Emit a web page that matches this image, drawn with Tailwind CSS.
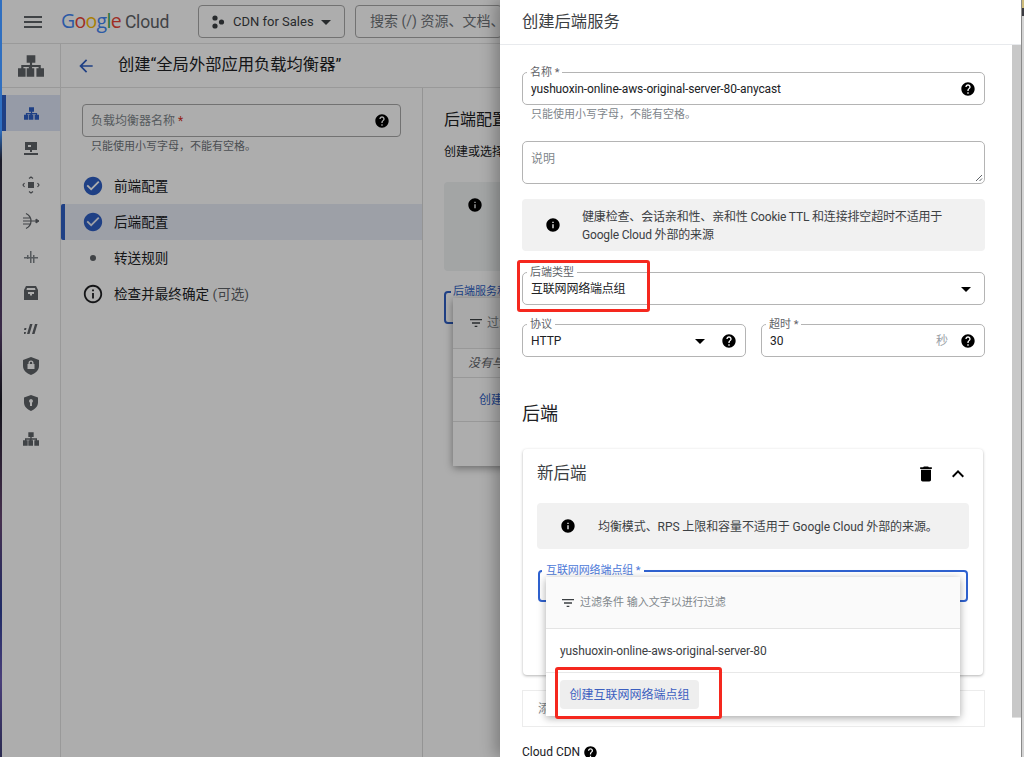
<!DOCTYPE html>
<html lang="zh-CN">
<head>
    <meta charset="UTF-8">
    <title>创建后端服务</title>
    <script src="https://cdn.jsdelivr.net/npm/@tailwindcss/browser@4"></script>
</head>
<body class="m-0 overflow-hidden bg-white">
    <svg class="hidden">
        <symbol id="help" viewBox="0 0 24 24"><path d="M12 2C6.48 2 2 6.48 2 12s4.48 10 10 10 10-4.48 10-10S17.52 2 12 2zm1 17h-2v-2h2v2zm2.07-7.75l-.9.92C13.45 12.9 13 13.5 13 15h-2v-.5c0-1.1.45-2.1 1.17-2.83l1.24-1.26c.37-.36.59-.86.59-1.41 0-1.1-.9-2-2-2s-2 .9-2 2H8c0-2.21 1.79-4 4-4s4 1.79 4 4c0 .88-.36 1.68-.93 2.25z"/></symbol>
        <symbol id="info" viewBox="0 0 24 24"><path d="M12 2C6.48 2 2 6.48 2 12s4.48 10 10 10 10-4.48 10-10S17.52 2 12 2zm1 15h-2v-6h2v6zm0-8h-2V7h2v2z"/></symbol>
        <symbol id="check" viewBox="0 0 24 24"><path d="M12 2C6.48 2 2 6.48 2 12s4.48 10 10 10 10-4.48 10-10S17.52 2 12 2zm-2 15l-5-5 1.41-1.41L10 14.17l7.59-7.59L19 8l-9 9z"/></symbol>
        <symbol id="filter" viewBox="0 0 24 24"><path d="M10 18h4v-2h-4v2zM3 6v2h18V6H3zm3 7h12v-2H6v2z"/></symbol>
        <symbol id="drop" viewBox="0 0 24 24"><path d="M7 10l5 5 5-5z"/></symbol>
        <symbol id="net" viewBox="0 0 24 24"><path d="M8 2h8v7h-3v2h8v3h3v8h-7v-8h2v-1h-6v1h2v8H8v-8h2v-1H5v1h2v8H0v-8h3v-3h8V9H8z"/></symbol>
    </svg>

    <div class="relative flex w-[1024px] h-[757px] overflow-hidden font-['Roboto','Noto_Sans_CJK_SC',sans-serif] text-[#202124]">
        <!-- wallpaper sliver at the window edge -->
        <div class="w-[2px] shrink-0 bg-[linear-gradient(180deg,#2f6fc0_0,#2f6fc0_130px,#1b1b28_160px,#3a2a48_330px,#111118_400px,#46304f_520px,#1f2b66_610px,#4a3f7a_680px,#2a2a50_757px)]"></div>

        <!-- page behind the drawer -->
        <div class="flex flex-col w-[1022px] shrink-0 bg-white">
            <header class="flex items-center h-[44px] shrink-0 border-b border-[#e4e4e4]">
                <svg class="w-[24px] h-[24px] ml-[19px] fill-[#5f6368]" viewBox="0 0 24 24"><path d="M3 18h18v-2H3v2zm0-5h18v-2H3v2zm0-7v2h18V6H3z"/></svg>
                <div class="flex items-baseline ml-[16px] w-[137px] leading-none whitespace-nowrap">
                    <span class="text-[19.5px] tracking-[-0.7px] font-['Open_Sans',sans-serif]"><span class="text-[#4285f4]">G</span><span class="text-[#ea4335]">o</span><span class="text-[#fbbc04]">o</span><span class="text-[#4285f4]">g</span><span class="text-[#34a853]">l</span><span class="text-[#ea4335]">e</span></span>
                    <span class="ml-[4px] text-[17.5px] tracking-[-0.2px] text-[#5f6368]">Cloud</span>
                </div>
                <div class="flex items-center w-[147px] h-[33px] border border-[#a8a8a8] rounded-[4px] text-[13px] text-[#3c4043]">
                    <svg class="w-[14px] h-[14px] ml-[12px] fill-[#3c4043]" viewBox="0 0 14 14"><circle cx="4" cy="3" r="2.6"/><circle cx="4" cy="11" r="2.6"/><circle cx="10.5" cy="7" r="2.6"/></svg>
                    <span class="ml-[8px] whitespace-nowrap">CDN for Sales</span>
                    <svg class="w-[24px] h-[24px] ml-auto mr-[6px] fill-[#3c4043]"><use href="#drop"/></svg>
                </div>
                <div class="flex items-center ml-[10px] w-[147px] h-[33px] pl-[14px] overflow-hidden border border-[#a8a8a8] rounded-[4px] text-[14px] text-[#70757a] whitespace-nowrap">搜索 (/) 资源、文档、产品及更多内容</div>
            </header>

            <div class="flex flex-1 min-h-0">
                <nav class="w-[59px] shrink-0 border-r border-[#e2e2e2]">
                    <div class="flex items-center justify-center h-[44px] border-b border-[#e2e2e2]">
                        <svg class="w-[26px] h-[26px] fill-[#5f6368]"><use href="#net"/></svg>
                    </div>
                    <div class="pt-[7px]">
                        <div class="flex items-center justify-center h-[36px] border-l-[4px] border-[#2f5fc4] bg-[#dde5f6] pr-[4px]">
                            <svg class="w-[15px] h-[15px] fill-[#2f5fc4]"><use href="#net"/></svg>
                        </div>
                        <div class="flex items-center justify-center h-[36px]">
                            <svg class="w-[16px] h-[16px] fill-[#5f6368]" viewBox="0 0 16 16"><path d="M2 1h12v8H2zM5 4h3v2H5zM7 9h2v2H7zM1 12h14v2H1z" fill-rule="evenodd"/></svg>
                        </div>
                        <div class="flex items-center justify-center h-[36px]">
                            <svg class="w-[18px] h-[18px] fill-none stroke-[#5f6368]" viewBox="0 0 18 18"><rect x="6.5" y="6.5" width="5" height="5" fill="#5f6368"/><path d="M7 2.5l2-1.500 2 1.500M7 15.500l2 1.500 2-1.500M2.500 7l-1.500 2 1.500 2M15.500 7l1.500 2-1.500 2" stroke-width="1.200"/></svg>
                        </div>
                        <div class="flex items-center justify-center h-[36px]">
                            <svg class="w-[18px] h-[18px] fill-none stroke-[#5f6368]" viewBox="0 0 18 18"><path d="M4 1.500c4 2 5 4.500 5 7.500s-1 5.500-5 7.500M1 6h8M1 9h15M1 12h8" stroke-width="1.200"/><path d="M14 7l3 2-3 2z" fill="#5f6368"/></svg>
                        </div>
                        <div class="flex items-center justify-center h-[36px]">
                            <svg class="w-[14px] h-[14px] fill-[#80868b]" viewBox="0 0 14 14"><path d="M6 1h1.500v12H6zM9 5h1.500v8H9zM0 7h6v1.500H0zM7 7h7v1.500H7zM3 5h1.500v4H3z"/></svg>
                        </div>
                        <div class="flex items-center justify-center h-[36px]">
                            <svg class="w-[16px] h-[16px] fill-[#5f6368]" viewBox="0 0 16 16"><path d="M3 1h10l2 4v10H1V5zM4 3L3.500 5h9L12 3zM5 7v2h2v1.500h2V9h2V7z" fill-rule="evenodd"/></svg>
                        </div>
                        <div class="flex items-center justify-center h-[36px]">
                            <svg class="w-[14px] h-[14px] fill-[#5f6368]" viewBox="0 0 14 14"><path d="M0 10h2l-.5 2h-2zM.5 6h2L2 8H0zM6 2h2.500L5.500 12H3zM11 2h2.500l-3 10H8z"/></svg>
                        </div>
                        <div class="flex items-center justify-center h-[38px]">
                            <svg class="w-[16px] h-[18px] fill-[#5f6368]" viewBox="0 0 16 18"><path d="M8 0l8 3v6c0 4-3.500 7.500-8 9-4.500-1.500-8-5-8-9V3zM5.500 7v-1a2.500 2.500 0 015 0v1H11.500v5h-7V7zM6.800 7h2.400v-1a1.200 1.200 0 00-2.400 0z" fill-rule="evenodd"/></svg>
                        </div>
                        <div class="flex items-center justify-center h-[36px]">
                            <svg class="w-[14px] h-[16px] fill-[#5f6368]" viewBox="0 0 14 16"><path d="M7 0l7 2.500v5c0 3.700-3 6.900-7 8.500-4-1.600-7-4.800-7-8.500v-5zM7 4a2 2 0 00-1 3.700V11h2V7.700A2 2 0 007 4z" fill-rule="evenodd"/></svg>
                        </div>
                        <div class="flex items-center justify-center h-[36px]">
                            <svg class="w-[16px] h-[16px] fill-[#5f6368]"><use href="#net"/></svg>
                        </div>
                    </div>
                </nav>

                <main class="flex-1 min-w-0 flex flex-col">
                    <div class="flex items-center h-[44px] shrink-0 border-b border-[#e2e2e2]">
                        <svg class="w-[20px] h-[20px] ml-[15px] fill-[#2f5fc4]" viewBox="0 0 24 24"><path d="M20 11H7.830l5.590-5.590L12 4l-8 8 8 8 1.410-1.410L7.830 13H20v-2z"/></svg>
                        <h1 class="ml-[22px] text-[16.3px] font-normal whitespace-nowrap">创建“全局外部应用负载均衡器”</h1>
                    </div>
                    <div class="flex flex-1 min-h-0">
                        <aside class="w-[362px] shrink-0 border-r border-[#dadada]">
                            <div class="mx-[21px] mt-[16px] flex items-center w-[319px] h-[33px] pl-[8px] pr-[10px] border border-[#a8a8a8] rounded-[4px] text-[12px] text-[#80868b]">
                                <span>负载均衡器名称 <span class="text-[#d93025]">*</span></span>
                                <svg class="w-[16px] h-[16px] ml-auto"><use href="#help"/></svg>
                            </div>
                            <p class="ml-[30px] mt-[2px] text-[11px] leading-[16px] text-[#70757a]">只能使用小写字母，不能有空格。</p>
                            <div class="mt-[13px] text-[13.6px]">
                                <div class="flex items-center h-[36px] pl-[21px]">
                                    <svg class="w-[22px] h-[22px] fill-[#2f5fc4]"><use href="#check"/></svg>
                                    <span class="ml-[10px]">前端配置</span>
                                </div>
                                <div class="flex items-center h-[36px] pl-[17px] border-l-[4px] border-[#2f5fc4] rounded-l-[2px] bg-[#e8ecf7]">
                                    <svg class="w-[22px] h-[22px] fill-[#2f5fc4]"><use href="#check"/></svg>
                                    <span class="ml-[10px]">后端配置</span>
                                </div>
                                <div class="flex items-center h-[36px] pl-[21px]">
                                    <span class="w-[22px] flex justify-center"><span class="w-[6px] h-[6px] rounded-full bg-[#5f6368]"></span></span>
                                    <span class="ml-[10px]">转送规则</span>
                                </div>
                                <div class="flex items-center h-[36px] pl-[21px]">
                                    <svg class="w-[22px] h-[22px] fill-[#202124]" viewBox="0 0 24 24"><path d="M11 7h2v2h-2zm0 4h2v6h-2zm1-9C6.480 2 2 6.480 2 12s4.480 10 10 10 10-4.480 10-10S17.520 2 12 2zm0 18c-4.410 0-8-3.590-8-8s3.590-8 8-8 8 3.590 8 8-3.590 8-8 8z"/></svg>
                                    <span class="ml-[10px]">检查并最终确定 <span class="text-[#5f6368]">(可选)</span></span>
                                </div>
                            </div>
                        </aside>

                        <section class="w-[78px] shrink-0 overflow-hidden pl-[21px]">
                            <h2 class="mt-[20px] text-[16px] leading-[24px] font-normal whitespace-nowrap">后端配置</h2>
                            <p class="mt-[12px] text-[12px] leading-[16px] whitespace-nowrap">创建或选择后端服务</p>
                            <div class="mt-[22px] h-[89px] rounded-l-[4px] bg-[#f1f3f4] pl-[23px] pt-[15px]">
                                <svg class="w-[16px] h-[16px]"><use href="#info"/></svg>
                            </div>
                            <div class="relative mt-[20px] w-[80px] h-[33px] border-2 border-[#2f5fc4] rounded-[4px]">
                                <span class="absolute -top-[8px] left-[5px] bg-white px-[2px] text-[11px] leading-[14px] text-[#2f5fc4] whitespace-nowrap">后端服务和后端存储分区</span>
                                <div class="absolute left-[7px] top-[5px] w-[300px] h-[168px] bg-white shadow-[0_2px_8px_rgba(0,0,0,0.4)]">
                                    <div class="flex items-center h-[51px] bg-[#fafafa] border-b border-[#e0e0e0] pl-[15px] text-[12px] text-[#80868b]">
                                        <svg class="w-[16px] h-[16px] fill-[#3c4043]"><use href="#filter"/></svg>
                                        <span class="ml-[3px] whitespace-nowrap">过滤条件</span>
                                    </div>
                                    <div class="flex items-center h-[29px] border-b border-[#e0e0e0] pl-[15px] text-[12px] italic text-[#5f6368] whitespace-nowrap">没有与过滤条件匹配的结果</div>
                                    <div class="flex items-center h-[44px] border-b border-[#e0e0e0] pl-[26px] text-[12px] text-[#2f5fc4] whitespace-nowrap">创建后端服务</div>
                                </div>
                            </div>
                        </section>
                    </div>
                </main>
            </div>
        </div>

        <!-- scrim over the page -->
        <div class="absolute left-[2px] top-0 w-[498px] h-full bg-black/32"></div>

        <!-- drawer -->
        <aside class="absolute left-[500px] top-0 w-[521px] h-full flex flex-col bg-white shadow-[-5px_0_14px_rgba(0,0,0,0.28)]">
            <div class="flex items-center h-[45px] shrink-0 pl-[22px] border-b border-[#e8eaed] text-[16.3px] text-[#3c4043]">创建后端服务</div>

            <div class="flex flex-1 min-h-0">
                <div class="relative w-[512px] shrink-0 pl-[22px] pr-[27px] text-[12px] text-[#3c4043]">
                    <div class="relative flex items-center mt-[27px] h-[33px] px-[8px] border border-[#b4b4b4] rounded-[5px]">
                        <span class="absolute -top-[6px] left-[4px] bg-white px-[3px] text-[11px] leading-[12px] text-[#5f6368]">名称 *</span>
                        <span class="pt-[1px] tracking-[-0.12px] text-[#202124]">yushuoxin-online-aws-original-server-80-anycast</span>
                        <svg class="w-[16px] h-[16px] ml-auto"><use href="#help"/></svg>
                    </div>
                    <p class="mt-[2px] ml-[9px] text-[11px] leading-[16px] text-[#80868b]">只能使用小写字母，不能有空格。</p>
                    <div class="relative mt-[18px] h-[43px] px-[8px] pt-[9px] border border-[#b4b4b4] rounded-[5px] leading-[16px] text-[#80868b]">
                        说明
                        <svg class="absolute right-[1px] bottom-[1px] w-[8px] h-[8px] stroke-[#5f6368] fill-none" viewBox="0 0 8 8"><path d="M1 7l6-6M4.500 7L7 4.500"/></svg>
                    </div>
                    <div class="flex items-center mt-[15px] h-[52px] rounded-[4px] bg-[#f1f1f1]">
                        <svg class="w-[16px] h-[16px] ml-[23px] shrink-0"><use href="#info"/></svg>
                        <p class="ml-[21px] pt-[2px] leading-[18px] tracking-[-0.17px] text-[#3c4043]">健康检查、会话亲和性、亲和性 Cookie TTL 和连接排空超时不适用于<br>Google Cloud 外部的来源</p>
                    </div>
                    <div class="relative flex items-center mt-[21px] h-[33px] px-[8px] border border-[#b4b4b4] rounded-[5px]">
                        <span class="absolute -top-[6px] left-[4px] bg-white px-[3px] text-[11px] leading-[12px] text-[#5f6368]">后端类型</span>
                        <span class="pt-[1px] tracking-[-0.2px] text-[#202124]">互联网网络端点组</span>
                        <svg class="w-[24px] h-[24px] ml-auto -mr-[2px]"><use href="#drop"/></svg>
                    </div>
                    <div class="flex gap-[15px] mt-[19px]">
                        <div class="relative flex items-center w-[224px] h-[33px] px-[8px] border border-[#b4b4b4] rounded-[5px]">
                            <span class="absolute -top-[6px] left-[4px] bg-white px-[3px] text-[11px] leading-[12px] text-[#5f6368]">协议</span>
                            <span class="pt-[1px] text-[#202124]">HTTP</span>
                            <svg class="w-[24px] h-[24px] ml-auto mr-[2px]"><use href="#drop"/></svg>
                            <svg class="w-[16px] h-[16px] ml-[7px]"><use href="#help"/></svg>
                        </div>
                        <div class="relative flex items-center w-[224px] h-[33px] px-[8px] border border-[#b4b4b4] rounded-[5px]">
                            <span class="absolute -top-[6px] left-[4px] bg-white px-[3px] text-[11px] leading-[12px] text-[#5f6368]">超时 *</span>
                            <span class="pt-[1px] text-[#202124]">30</span>
                            <span class="ml-auto mr-[4px] text-[#9aa0a6]">秒</span>
                            <svg class="w-[16px] h-[16px] ml-[8px]"><use href="#help"/></svg>
                        </div>
                    </div>
                    <h3 class="mt-[45px] text-[18px] leading-[24px] font-normal text-[#202124]">后端</h3>

                    <div class="relative mt-[23px] ml-[1px] w-[460px] h-[226px] rounded-[4px] bg-white shadow-[0_1px_3px_rgba(0,0,0,0.3)]">
                        <div class="flex items-center h-[50px] mb-[4px] pl-[14px] pr-[13px]">
                            <span class="text-[16.5px] text-[#3c4043]">新后端</span>
                            <svg class="w-[20px] h-[20px] ml-auto" viewBox="0 0 24 24"><path d="M6 19c0 1.100.9 2 2 2h8c1.100 0 2-.9 2-2V7H6v12zM19 4h-3.500l-1-1h-5l-1 1H5v2h14V4z"/></svg>
                            <svg class="w-[24px] h-[24px] ml-[10px]" viewBox="0 0 24 24"><path d="M12 8l-6 6 1.410 1.410L12 10.830l4.590 4.580L18 14z"/></svg>
                        </div>
                        <div class="flex items-center mx-[14px] h-[46px] rounded-[4px] bg-[#f1f1f1]">
                            <svg class="w-[16px] h-[16px] ml-[23px]"><use href="#info"/></svg>
                            <p class="ml-[22px] pt-[1px] tracking-[-0.08px] text-[#3c4043]">均衡模式、RPS 上限和容量不适用于 Google Cloud 外部的来源。</p>
                        </div>
                        <div class="relative mt-[21px] mx-[15px] h-[32px] border-2 border-[#2f62d0] rounded-[4px]">
                            <span class="absolute -top-[7px] left-[2px] bg-white px-[4px] text-[11px] leading-[12px] tracking-[-0.1px] text-[#4d79d8]">互联网网络端点组 *</span>
                            <!-- open dropdown -->
                            <div class="absolute z-10 left-[6px] top-[5px] w-[414px] h-[139px] bg-white shadow-[0_2px_8px_rgba(0,0,0,0.35)]">
                                <div class="flex items-center h-[52px] pl-[14px] pt-[1px] bg-[#fafafa] border-b border-[#e4e4e4] text-[11px] text-[#80868b]">
                                    <svg class="w-[16px] h-[16px] fill-[#3c4043]"><use href="#filter"/></svg>
                                    <span class="ml-[4px]">过滤条件 输入文字以进行过滤</span>
                                </div>
                                <div class="flex items-center h-[44px] pl-[14px] pt-[1px] border-b border-[#e8e8e8] tracking-[-0.1px] text-[#3c4043]">yushuoxin-online-aws-original-server-80</div>
                                <div class="flex items-center w-[139px] h-[29px] ml-[14px] mt-[7px] justify-center rounded-[4px] bg-[#eeeeee] text-[#3c5fc0]">创建互联网网络端点组</div>
                            </div>
                        </div>
                    </div>

                    <div class="flex items-center mt-[15px] h-[37px] pl-[15px] border border-[#ececec] text-[#80868b]">添加后端</div>
                    <div class="flex items-center gap-[3px] mt-[17px] leading-[16px] text-[#202124]">
                        Cloud CDN
                        <svg class="w-[15px] h-[15px]"><use href="#help"/></svg>
                    </div>
                </div>

                <!-- scrollbar -->
                <div class="w-[9px] shrink-0">
                    <div class="h-[673px] border-b border-[#e0e0e0] bg-[#c8c8c8]"></div>
                </div>
            </div>

            <!-- red annotation boxes -->
            <div class="absolute left-[17px] top-[260px] w-[133px] h-[52px] border-[3px] border-[#f5281e] rounded-[3px]"></div>
            <div class="absolute z-20 left-[55px] top-[667px] w-[167px] h-[52px] border-[3px] border-[#f5281e] rounded-[3px]"></div>
        </aside>

        <!-- next window peeking out at the right edge -->
        <div class="absolute right-0 top-0 w-[3px] h-full border-l border-[#8a8a8a] bg-[#d4d4d4]">
            <div class="h-[8px] bg-[#cdbb7a]"></div>
            <div class="h-[8px] bg-[#3a3a40]"></div>
        </div>
    </div>
</body>
</html>
